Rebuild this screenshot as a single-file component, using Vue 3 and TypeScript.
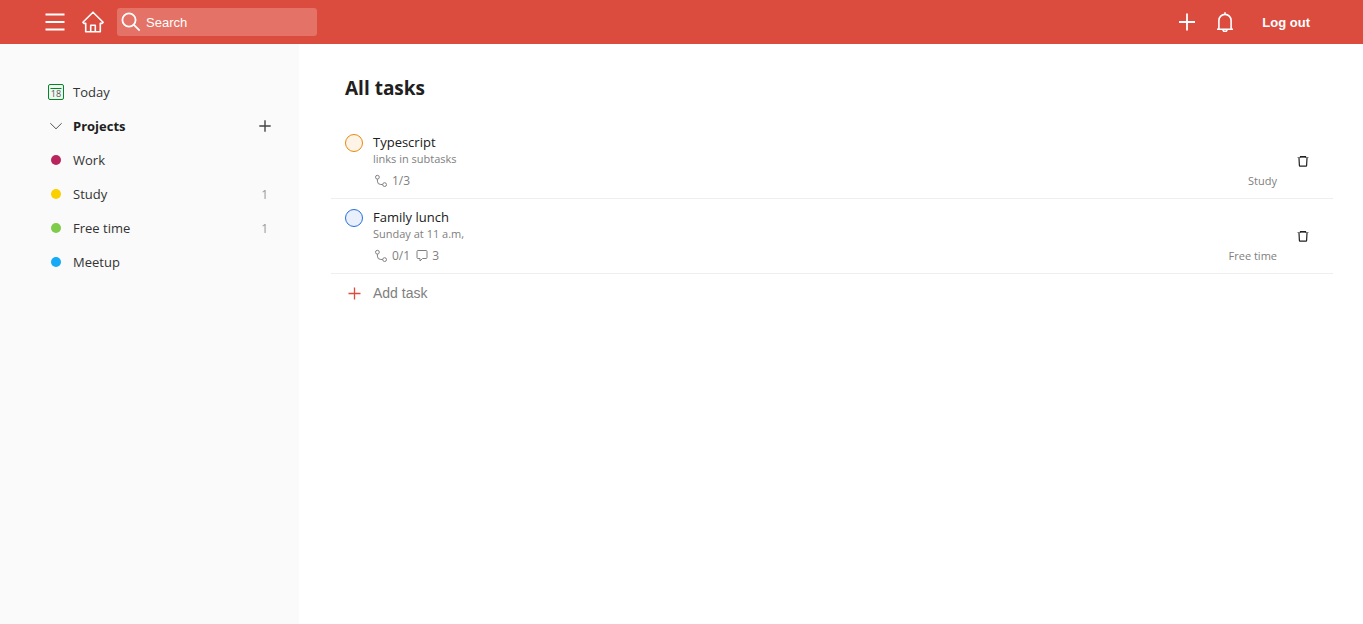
<script setup lang="ts">
import { ref } from 'vue'

interface Project {
  name: string
  color: string
  count?: number
}

interface Task {
  id: number
  title: string
  description: string
  subtasks: string
  comments?: number
  project: string
  priority: 'orange' | 'blue'
}

const query = ref('')

const projects: Project[] = [
  { name: 'Work', color: '#b8255f' },
  { name: 'Study', color: '#fad000', count: 1 },
  { name: 'Free time', color: '#7ecc49', count: 1 },
  { name: 'Meetup', color: '#14aaf5' },
]

const tasks: Task[] = [
  { id: 1, title: 'Typescript', description: 'links in subtasks', subtasks: '1/3', project: 'Study', priority: 'orange' },
  { id: 2, title: 'Family lunch', description: 'Sunday at 11 a.m,', subtasks: '0/1', comments: 3, project: 'Free time', priority: 'blue' },
]
</script>

<template>
  <div class="app">
    <header class="topbar">
      <button class="icon-button" type="button" aria-label="Menu">
        <svg width="20" height="20" viewBox="0 0 20 20" fill="none" stroke="currentColor" stroke-width="1.8">
          <path d="M.5 2.5h19M.5 10h19M.5 17.5h19" />
        </svg>
      </button>
      <button class="icon-button home" type="button" aria-label="Home">
        <svg width="22" height="22" viewBox="0 0 22 22" fill="none" stroke="currentColor" stroke-width="1.6" stroke-linejoin="round">
          <path d="M11 1.2.9 11.3l1.2 1.1h1.6v8.4h14.6v-8.4h1.6l1.2-1.1z" />
          <path d="M8.7 20.5v-6.2h4.6v6.2" />
        </svg>
      </button>
      <label class="search">
        <svg width="20" height="20" viewBox="0 0 20 20" fill="none" stroke="currentColor" stroke-width="1.8">
          <circle cx="8" cy="8" r="6.6" />
          <path d="m12.7 12.7 6 6" />
        </svg>
        <input v-model="query" type="text" placeholder="Search" aria-label="Search">
      </label>
      <div class="actions">
        <button class="icon-button" type="button" aria-label="Quick add">
          <svg width="20" height="20" viewBox="0 0 20 20" fill="none" stroke="currentColor" stroke-width="1.8">
            <path d="M10 1.5v17M2 10h16" />
          </svg>
        </button>
        <button class="icon-button" type="button" aria-label="Notifications">
          <svg width="20" height="20" viewBox="0 0 20 20" fill="none" stroke="currentColor" stroke-width="1.6">
            <path d="M2 17.2h16M3.9 17.2V8.5a6.1 6.1 0 0 1 12.2 0v8.7M10 .2v2.2M8 17.6a2 1.9 0 0 0 4 0" />
          </svg>
        </button>
        <button class="logout" type="button">Log out</button>
      </div>
    </header>

    <div class="body">
      <nav class="sidebar" aria-label="Projects">
        <a class="nav-row" href="#today">
          <span class="marker">
            <svg width="16" height="16" viewBox="0 0 16 16" fill="none" stroke="#058527">
              <rect x=".5" y=".5" width="15" height="15" rx="1.5" fill="#eef7f0" />
              <path d="M2.5 4.5h11" />
              <text x="8" y="13" text-anchor="middle" class="day">18</text>
            </svg>
          </span>
          <span class="nav-name">Today</span>
        </a>
        <div class="nav-row heading">
          <button class="toggle" type="button">
            <span class="marker">
              <svg width="14" height="8" viewBox="0 0 14 8" fill="none" stroke="#555">
                <path d="m1.3 1.2 5.7 5.6 5.7-5.6" />
              </svg>
            </span>
            <span class="nav-name">Projects</span>
          </button>
          <button class="add-project" type="button" aria-label="Add project">
            <svg width="12" height="12" viewBox="0 0 12 12" fill="none" stroke="#444" stroke-width="1.4">
              <path d="M6 .3v11.4M.3 6h11.4" />
            </svg>
          </button>
        </div>
        <a v-for="project in projects" :key="project.name" class="nav-row" href="#project">
          <span class="marker"><span class="dot" :style="{ background: project.color }" /></span>
          <span class="nav-name">{{ project.name }}</span>
          <span v-if="project.count" class="count">{{ project.count }}</span>
        </a>
      </nav>

      <main class="content">
        <h1>All tasks</h1>
        <ul class="tasks">
          <li v-for="task in tasks" :key="task.id" class="task">
            <input class="check" :class="task.priority" type="checkbox" :aria-label="task.title">
            <div class="details">
              <div class="title">{{ task.title }}</div>
              <div class="description">{{ task.description }}</div>
              <div class="meta">
                <svg width="14" height="14" viewBox="0 0 14 14" fill="none" stroke="#808080">
                  <circle cx="3.4" cy="3.2" r="1.9" />
                  <circle cx="10.6" cy="10.6" r="1.9" />
                  <path d="M3.4 5.2v1.9a3.4 3.4 0 0 0 3.4 3.4h1.8" />
                </svg>
                <span class="number">{{ task.subtasks }}</span>
                <template v-if="task.comments">
                  <svg class="comment" width="12" height="12" viewBox="0 0 12 12" fill="none" stroke="#808080">
                    <path d="M2 .5h8a1 1 0 0 1 1 1v6a1 1 0 0 1-1 1H6.5L4 11V8.500H2a1 1 0 0 1-1-1v-6a1 1 0 0 1 1-1z" />
                  </svg>
                  <span class="number">{{ task.comments }}</span>
                </template>
                <span class="project">{{ task.project }}</span>
              </div>
            </div>
            <button class="delete" type="button" aria-label="Delete task">
              <svg width="12" height="12" viewBox="0 0 12 12" fill="none" stroke="#202020">
                <path d="M.5 2.5h11" stroke="#777" />
                <path d="M3.5 2.5v-1h5v1M2 3l.4 7.5a.6.6 0 0 0 .6.6h6a.6.6 0 0 0 .6-.6L10 3" stroke-width="1.2" />
              </svg>
            </button>
          </li>
        </ul>
        <button class="add-task" type="button">
          <svg width="13" height="13" viewBox="0 0 13 13" fill="none" stroke="#dd4b39" stroke-width="1.3">
            <path d="M6.5.5v12M.5 6.5h12" />
          </svg>
          <span>Add task</span>
        </button>
      </main>
    </div>
  </div>
</template>

<style>
body {
  margin: 0;
}
</style>

<style scoped>
.app {
  min-height: 100vh;
  display: flex;
  flex-direction: column;
  background: #fff;
  color: #202020;
  font-family: "Open Sans", "Noto Sans", sans-serif;
  font-size: 13px;
}

button {
  padding: 0;
  border: 0;
  background: none;
  color: inherit;
  font: inherit;
  cursor: pointer;
}

svg {
  display: block;
  flex: none;
}

.topbar {
  height: 44px;
  box-sizing: border-box;
  padding: 0 42px;
  display: flex;
  align-items: center;
  background: #db4c3f;
  color: #fff;
}

.icon-button {
  width: 26px;
  height: 28px;
  display: flex;
  align-items: center;
  justify-content: center;
}

.home {
  margin: 0 11px 0 12px;
}

.search {
  width: 200px;
  height: 28px;
  box-sizing: border-box;
  padding: 0 4px;
  display: flex;
  align-items: center;
  gap: 5px;
  border-radius: 3px;
  background: #e47266;
}

.search input {
  min-width: 0;
  flex: 1;
  padding: 0;
  border: 0;
  outline: 0;
  background: none;
  color: #fff;
  font: 13px "Liberation Sans", Arial, sans-serif;
}

.search input::placeholder {
  color: #fff;
  opacity: 1;
}

.actions {
  margin-left: auto;
  display: flex;
  align-items: center;
  gap: 12px;
}

.logout {
  padding: 0 11px 0 12px;
  font: bold 13px "Liberation Sans", Arial, sans-serif;
}

.body {
  flex: 1;
  display: flex;
}

.sidebar {
  width: 299px;
  flex: none;
  box-sizing: border-box;
  padding: 31px 26px 0 42px;
  background: #fafafa;
}

.nav-row {
  height: 34px;
  display: flex;
  align-items: center;
  color: #333;
  text-decoration: none;
}

.marker {
  width: 28px;
  flex: none;
  display: flex;
  justify-content: center;
}

.nav-name {
  margin-left: 3px;
}

.heading {
  justify-content: space-between;
  color: #202020;
  font-weight: 700;
}

.toggle {
  display: flex;
  align-items: center;
}

.add-project {
  padding: 2px;
}

.day {
  fill: #555;
  stroke: none;
  font: 9px "Open Sans", sans-serif;
}

.dot {
  width: 10px;
  height: 10px;
  border-radius: 50%;
}

.count {
  margin: 0 5px 0 auto;
  color: #999;
  font-size: 12px;
}

.content {
  min-width: 0;
  flex: 1;
  padding: 30px 30px 0 32px;
}

h1 {
  margin: 0 14px 22px;
  font-size: 19px;
  line-height: 28px;
}

.tasks {
  margin: 0;
  padding: 0;
  list-style: none;
}

.task {
  padding: 9px 24px 9px 14px;
  display: flex;
  align-items: flex-start;
  border-bottom: 1px solid #eee;
}

.check {
  appearance: none;
  width: 18px;
  height: 18px;
  margin: 1px 10px 0 0;
  flex: none;
  border: 1px solid;
  border-radius: 50%;
}

.orange {
  border-color: #eb8909;
  background: #fdf3e6;
}

.blue {
  border-color: #246fe0;
  background: #e9f0fc;
}

.details {
  min-width: 0;
  flex: 1;
  color: #808080;
  font-size: 11px;
  line-height: 16px;
}

.title {
  color: #202020;
  font-size: 13px;
  line-height: 18px;
}

.meta {
  margin-top: 6px;
  display: flex;
  align-items: center;
  gap: 4px;
}

.meta svg:first-child {
  margin-left: 1px;
}

.number {
  font-size: 12px;
}

.comment {
  margin-left: 2px;
}

.project {
  margin-left: auto;
}

.delete {
  margin-left: 20px;
  align-self: center;
}

.add-task {
  height: 38px;
  padding: 0 17px;
  display: flex;
  align-items: center;
  gap: 12px;
  color: #808080;
  font: 14px "Liberation Sans", Arial, sans-serif;
}
</style>
